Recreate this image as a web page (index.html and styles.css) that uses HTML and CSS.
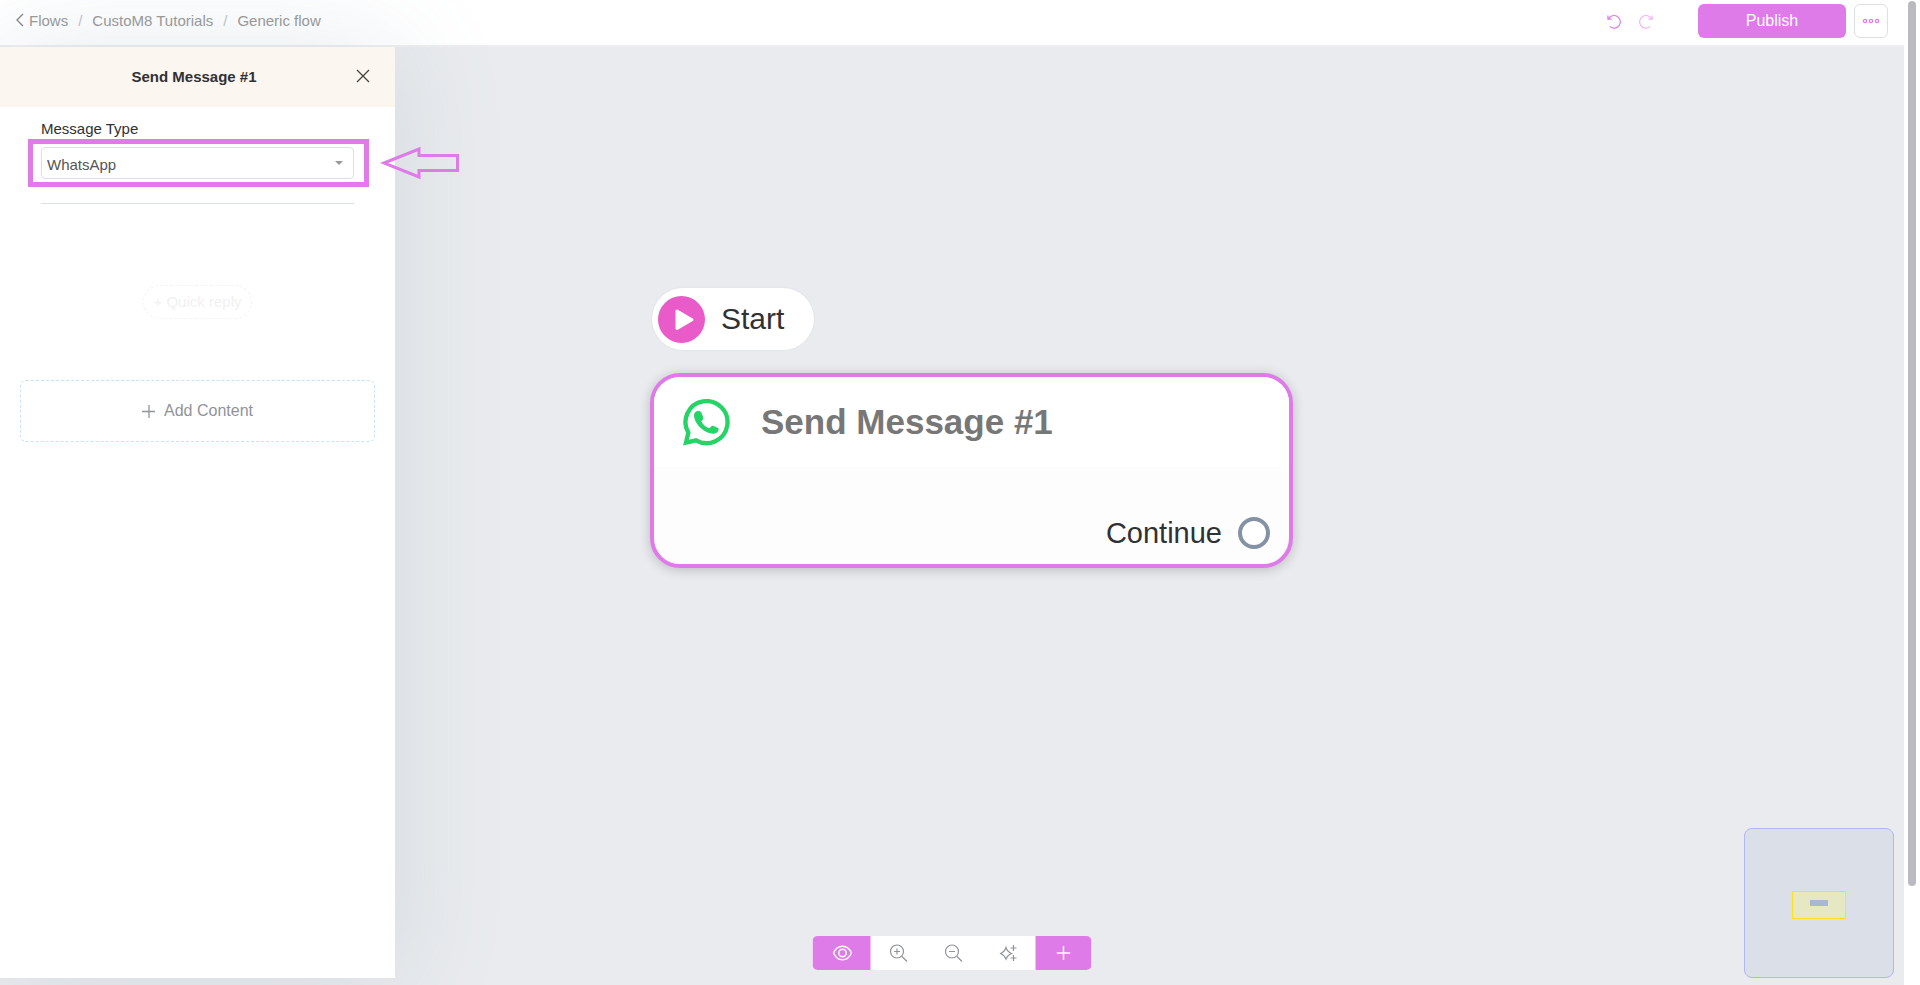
FILE: index.html
```
<!DOCTYPE html>
<html lang="en">
<head>
  <meta charset="UTF-8">
  <title>Generic flow</title>
  <link rel="stylesheet" href="styles.css">
</head>
<body>
  <div class="page">
    <div class="app">
      <header class="topbar">
        <nav class="breadcrumb">
          <a href="#" class="back">
            <svg width="8" height="14" viewBox="0 0 8 14"><path d="M7 1L1 7l6 6"/></svg>
            Flows
          </a>
          <span class="sep">/</span>
          <a href="#">CustoM8 Tutorials</a>
          <span class="sep">/</span>
          <a href="#">Generic flow</a>
        </nav>
        <div class="actions">
          <button class="icon-btn" aria-label="Undo">
            <svg width="16" height="16" viewBox="0 0 16 16"><path d="M1.500 5.500A6.700 6.700 0 1 1 3 13.200M1 1.500V5.500H5"/></svg>
          </button>
          <button class="icon-btn faded" aria-label="Redo">
            <svg width="16" height="16" viewBox="0 0 16 16"><path d="M14.500 5.500A6.700 6.700 0 1 0 13 13.200M15 1.500V5.500H11"/></svg>
          </button>
          <button class="publish">Publish</button>
          <button class="more" aria-label="More">
            <svg width="18" height="6" viewBox="0 0 18 6"><circle cx="3" cy="3" r="1.600"/><circle cx="9" cy="3" r="1.600"/><circle cx="15" cy="3" r="1.600"/></svg>
          </button>
        </div>
      </header>

      <main class="workspace">
        <div class="node-start">
          <svg width="47" height="47" viewBox="0 0 47 47">
            <circle cx="23.500" cy="23.500" r="23.500" fill="#e85bc8"/>
            <path d="M19 15v17.500l15-8.800z" fill="#fff" stroke="#fff" stroke-width="3" stroke-linejoin="round"/>
          </svg>
          <span>Start</span>
        </div>

        <div class="node-message">
          <div class="node-head">
            <svg width="47" height="47" viewBox="0 0 141 141">
              <path d="M9 131L16 101A63 63 0 1 1 39 124Z" fill="none" stroke="#25d366" stroke-width="13"/>
              <path d="M33 49c0-8 5-13 12-13 6 0 9 1 11 7l5 13c1 4-5 9-6 11 4 9 13 17 23 21 4-2 8-9 12-8l15 7c3 2 2 4 1 8-2 6-10 9-16 9-11 0-25-6-36-16-13-12-21-26-21-39z" fill="#25d366"/>
            </svg>
            <h2>Send Message #1</h2>
          </div>
          <div class="node-foot">
            <span>Continue</span>
            <span class="port"></span>
          </div>
        </div>

        <div class="toolbar">
          <button class="pink eye" aria-label="Preview">
            <svg width="20" height="16" viewBox="0 0 20 16"><path d="M1 8C5-1 15-1 19 8 15 17 5 17 1 8z"/><circle cx="10" cy="8" r="3.700"/></svg>
          </button>
          <button aria-label="Zoom in">
            <svg width="18" height="18" viewBox="0 0 18 18"><circle cx="7.500" cy="7.500" r="6.500"/><path d="M12.500 12.500L17.500 17.500M7.500 4.500v6M4.500 7.500h6"/></svg>
          </button>
          <button aria-label="Zoom out">
            <svg width="18" height="18" viewBox="0 0 18 18"><circle cx="7.500" cy="7.500" r="6.500"/><path d="M12.500 12.500L17.500 17.500M4.500 7.500h6"/></svg>
          </button>
          <button aria-label="Arrange">
            <svg width="18" height="18" viewBox="0 0 18 18"><path d="M6.500 3.500Q8 8 12 9.500 8 11 6.500 15 5 11 1 9.500 5 8 6.500 3.500zM14 1v6M11 4h6M14 11v6M11 14h6"/></svg>
          </button>
          <button class="pink add" aria-label="Add">
            <svg width="14" height="14" viewBox="0 0 14 14"><path d="M7 0v14M0 7h14"/></svg>
          </button>
        </div>

        <div class="minimap">
          <div class="viewport"><div class="mini-node"></div></div>
        </div>
      </main>

      <aside class="panel">
        <div class="panel-head">
          <h1>Send Message #1</h1>
          <button class="close" aria-label="Close">
            <svg width="14" height="14" viewBox="0 0 14 14"><path d="M1 1l12 12M13 1L1 13"/></svg>
          </button>
        </div>
        <div class="panel-body">
          <label for="messageType">Message Type</label>
          <div class="highlight">
            <div class="select">
              <select id="messageType">
                <option>WhatsApp</option>
              </select>
              <svg width="8" height="4" viewBox="0 0 8 4"><path d="M0 0h8L4 4z"/></svg>
            </div>
          </div>
          <hr>
          <button class="quick-reply">+ Quick reply</button>
          <button class="add-content">
            <svg width="14" height="14" viewBox="0 0 14 14"><path d="M7 1v13M0 7.500h13"/></svg>
            Add Content
          </button>
        </div>
        <svg class="arrow" width="80" height="34" viewBox="0 0 80 34"><path d="M4 17L39 3V9.500H77.500V24.500H39V31z"/></svg>
      </aside>
    </div>
    <div class="scrollbar"><div class="thumb"></div></div>
  </div>
</body>
</html>
```
FILE: styles.css
```
* {
  box-sizing: border-box;
}

body {
  margin: 0;
  font-family: "Liberation Sans", Arial, sans-serif;
  font-size: 15px;
  color: #303133;
  background: #fff;
}

h1, h2 {
  margin: 0;
}

a {
  color: inherit;
  text-decoration: none;
}

button {
  font-family: inherit;
  padding: 0;
  border: none;
  background: none;
  cursor: pointer;
}

svg {
  display: block;
  flex: none;
  fill: none;
}

.page {
  display: flex;
  height: 100vh;
}

.app {
  position: relative;
  flex: 1;
  display: flex;
  flex-direction: column;
  overflow: hidden;
}

/* top bar */
.topbar {
  display: flex;
  justify-content: space-between;
  align-items: flex-start;
  height: 47px;
  padding: 4px 16px 0 16px;
  background: #fff;
  border-bottom: 2px solid #eeeeef;
}

.breadcrumb {
  display: flex;
  align-items: center;
  gap: 10px;
  height: 32px;
  color: #999;
}

.breadcrumb a {
  display: flex;
  align-items: center;
}

.back {
  gap: 5px;
}

.back svg {
  stroke: #888;
  stroke-width: 1.4;
}

.sep {
  color: #c0c4cc;
}

.actions {
  display: flex;
  align-items: center;
}

.icon-btn {
  padding: 0 8px;
  height: 34px;
}

.icon-btn svg {
  width: 15px;
  height: 15px;
  stroke: #df7be8;
  stroke-width: 1.3;
}

.icon-btn.faded svg {
  stroke: #f3b5f4;
}

.publish {
  width: 148px;
  height: 34px;
  margin: 0 8px 0 37px;
  border-radius: 6px;
  background: #df7be8;
  color: #fff;
  font-size: 16px;
}

.more {
  display: flex;
  align-items: center;
  justify-content: center;
  width: 34px;
  height: 34px;
  border: 1px solid #dcdfe6;
  border-radius: 6px;
}

.more svg {
  stroke: #df7be8;
  stroke-width: 1.3;
}

/* flow canvas */
.workspace {
  position: relative;
  flex: 1;
  background: #e9ebee;
}

.node-start {
  position: absolute;
  left: 652px;
  top: 241px;
  display: flex;
  align-items: center;
  gap: 16px;
  height: 62px;
  padding: 0 30px 0 6px;
  border-radius: 31px;
  background: #fff;
  box-shadow: 0 0 2px rgba(0, 0, 0, 0.08);
  font-size: 30px;
  line-height: 32px;
}

.node-message {
  position: absolute;
  left: 650px;
  top: 326px;
  width: 643px;
  border: 4px solid #df7be8;
  border-radius: 30px;
  background: #fdfdfd;
  box-shadow: 0 2px 12px rgba(0, 0, 0, 0.2);
  overflow: hidden;
}

.node-head {
  display: flex;
  align-items: center;
  gap: 31px;
  height: 90px;
  padding: 0 29px;
  background: #fff;
}

.node-head h2 {
  font-size: 35px;
  color: #777;
}

.node-foot {
  display: flex;
  align-items: flex-end;
  justify-content: flex-end;
  gap: 16px;
  height: 97px;
  padding: 0 19px 15px 0;
  font-size: 29px;
  line-height: 32px;
}

.port {
  width: 32px;
  height: 32px;
  border: 4px solid #8492a6;
  border-radius: 50%;
  background: #fff;
}

.toolbar {
  position: absolute;
  bottom: 15px;
  left: 50%;
  transform: translateX(-50%);
  display: flex;
  border-radius: 5px;
  background: #fff;
  overflow: hidden;
}

.toolbar button {
  display: flex;
  align-items: center;
  justify-content: center;
  width: 55px;
  height: 34px;
}

.toolbar svg {
  stroke: #909399;
  stroke-width: 1.2;
}

.toolbar .pink {
  background: #df7be8;
}

.toolbar .eye {
  width: 58px;
  padding-left: 2px;
}

.toolbar .add {
  width: 56px;
}

.toolbar .pink svg {
  stroke: #fff;
  stroke-width: 1.5;
}

.minimap {
  position: absolute;
  right: 10px;
  bottom: 7px;
  display: flex;
  align-items: center;
  justify-content: center;
  width: 150px;
  height: 150px;
  padding-top: 4px;
  border: 1px solid #b0b6fa;
  border-radius: 8px;
  background: #dbdfe7;
}

.viewport {
  display: flex;
  justify-content: center;
  width: 54px;
  height: 28px;
  padding-top: 8px;
  border: 1px solid #ffe31a;
  background: #e6e8c4;
}

.mini-node {
  width: 18px;
  height: 6px;
  background: #a9b7d1;
}

/* side panel */
.panel {
  position: absolute;
  left: 0;
  top: 47px;
  bottom: 7px;
  width: 395px;
  background: #fff;
  box-shadow: 0 0 100px rgba(125, 155, 170, 0.2);
}

.panel-head {
  display: flex;
  align-items: center;
  height: 60px;
  padding: 0 25px 2px 32px;
  background: #fbf6ef;
}

.panel-head h1 {
  flex: 1;
  font-size: 15px;
  text-align: center;
}

.close svg {
  stroke: #444;
  stroke-width: 1.3;
}

.panel-body {
  display: flex;
  flex-direction: column;
  padding: 12px 41px;
}

.panel-body label {
  line-height: 20px;
}

.highlight {
  margin: 0 -15px 0 -13px;
  padding: 3px 10px 3px 8px;
  border: 5px solid #df7be8;
}

.select {
  position: relative;
}

.select select {
  display: block;
  width: 100%;
  height: 32px;
  padding: 2px 5px 0 5px;
  border: 1px solid #dcdfe6;
  border-radius: 4px;
  background: #fff;
  color: #555;
  font-family: inherit;
  font-size: 15px;
  appearance: none;
}

.select svg {
  position: absolute;
  right: 11px;
  top: 14px;
  fill: #999;
}

.panel-body hr {
  width: 100%;
  margin: 16px 0 0;
  border: none;
  border-top: 1px solid #dcdfe6;
}

.quick-reply {
  align-self: center;
  height: 34px;
  margin-top: 81px;
  padding: 0 10px 2px;
  border: 1px dashed #f3f3f3;
  border-radius: 17px;
  color: #f1f1f2;
  font-size: 15px;
}

.add-content {
  display: flex;
  align-items: center;
  justify-content: center;
  gap: 8px;
  height: 62px;
  margin: 61px -21px 0;
  border: 1px dashed #c6e2ff;
  border-radius: 6px;
  color: #909399;
  font-size: 16px;
}

.add-content svg {
  stroke: #909399;
  stroke-width: 1.3;
}

.arrow {
  position: absolute;
  left: 380px;
  top: 99px;
  stroke: #df7be8;
  stroke-width: 3;
}

.scrollbar {
  width: 16px;
  padding: 1px 4px;
  background: #fff;
}

.thumb {
  height: 90%;
  border-radius: 4px;
  background: #babac0;
}
```
